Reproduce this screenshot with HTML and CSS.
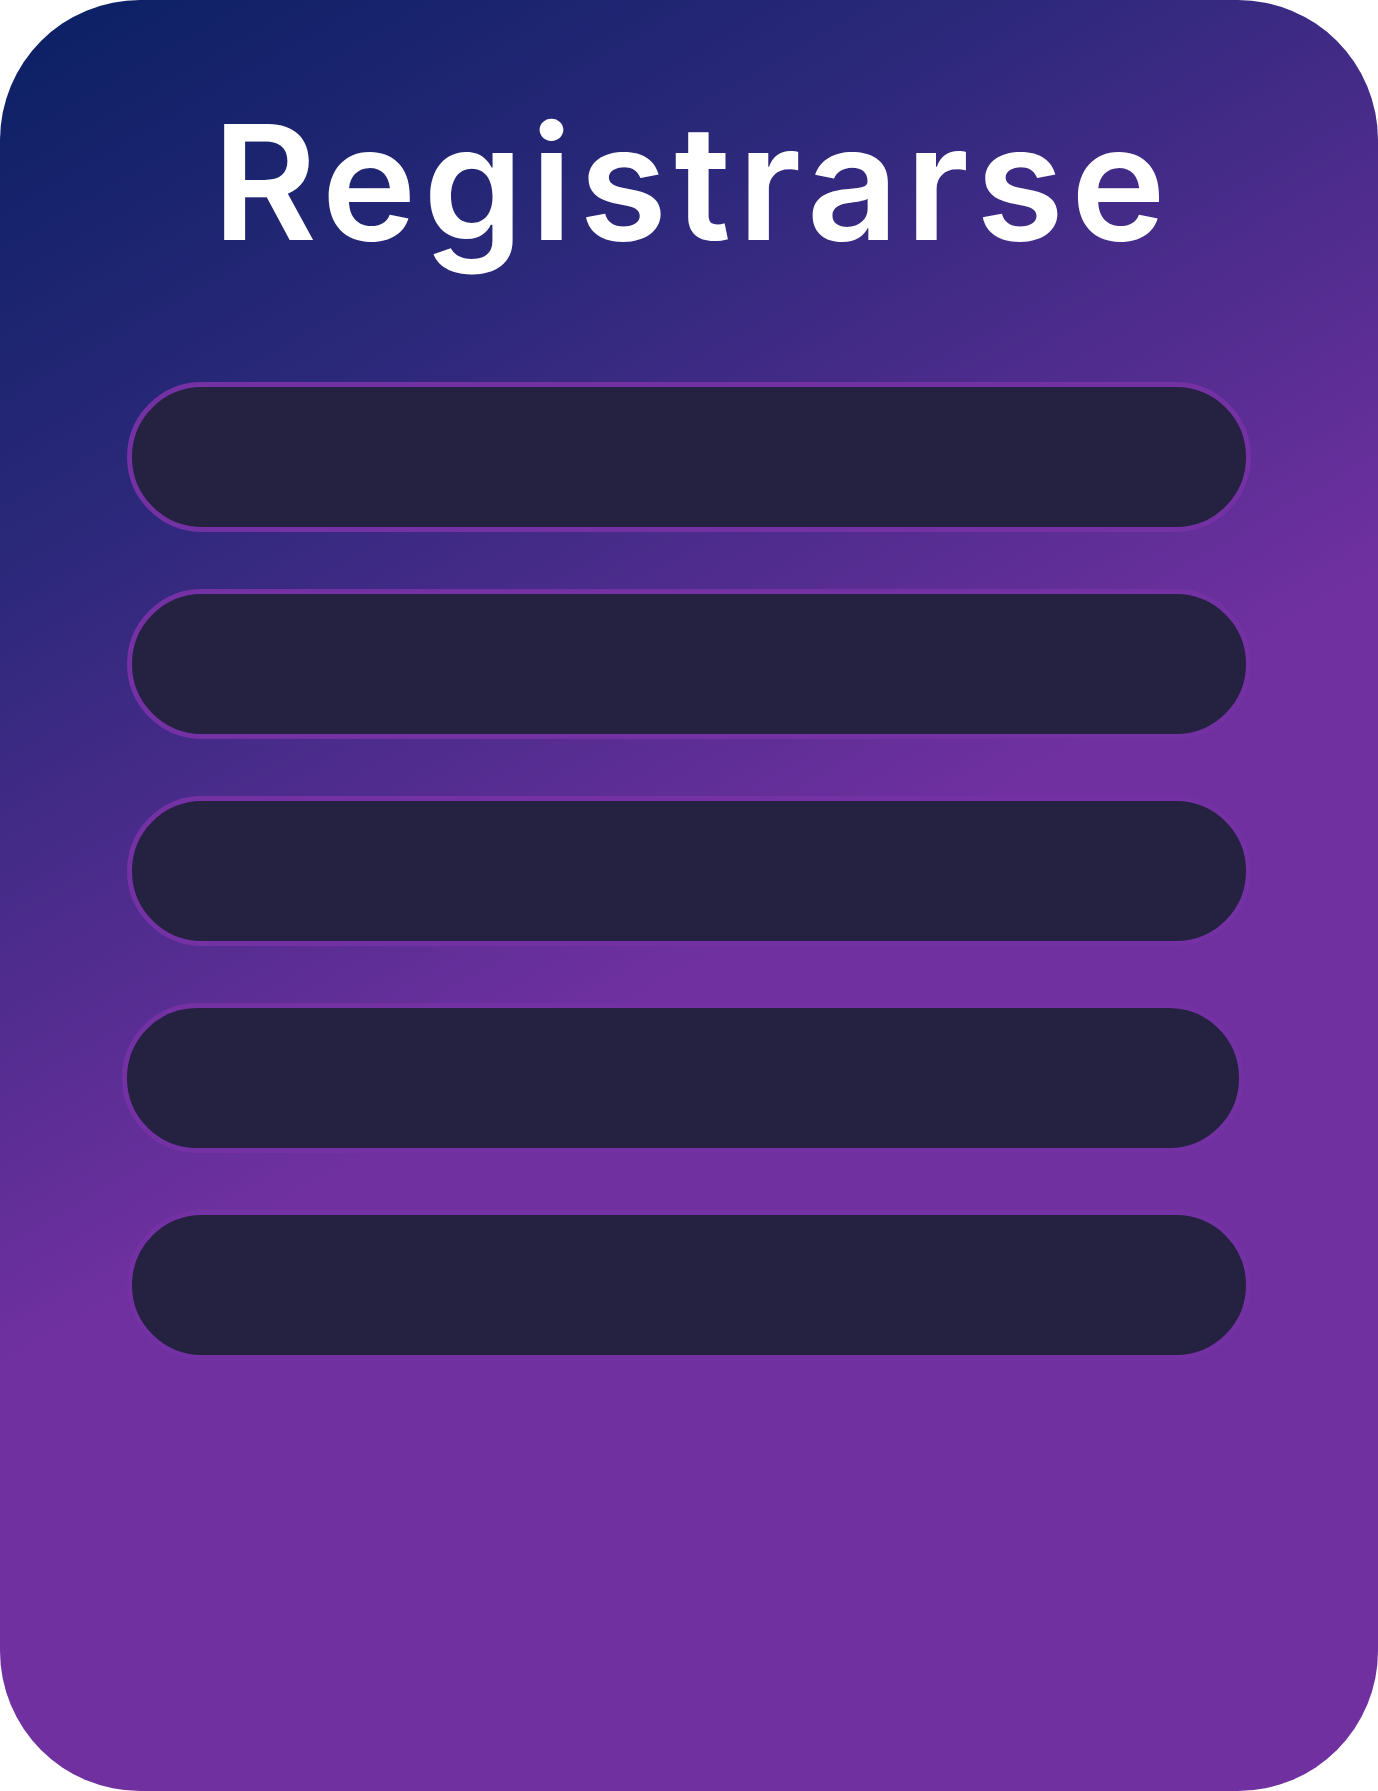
FILE: index.html
```html
<!DOCTYPE html>
<html lang="es">
<head>
<meta charset="utf-8">
<title>Registrarse</title>
<link rel="stylesheet" href="styles.css">
</head>
<body>
<main class="card">
  <h1 class="title">Registrarse</h1>
  <form class="form">
    <input class="field" type="text" aria-label="Nombre">
    <input class="field" type="email" aria-label="Correo">
    <input class="field" type="text" aria-label="Usuario">
    <input class="field field--shift" type="password" aria-label="Contraseña">
    <input class="field" type="password" aria-label="Confirmar contraseña">
  </form>
</main>
</body>
</html>
```

FILE: styles.css
```css
* { box-sizing: border-box; }
html, body { margin: 0; padding: 0; background: #ffffff; }
.card {
  width: 1378px;
  height: 1791px;
  border-radius: 140px;
  background: linear-gradient(150deg, #0a2063 0%, #2b287a 22%, #7030a0 53%, #7030a0 100%);
  padding-top: 102px;
  display: flex;
  flex-direction: column;
  align-items: center;
  font-family: "Inter", "Liberation Sans", sans-serif;
}
.title {
  margin: 0;
  padding-left: 7px;
  font-size: 160px;
  line-height: 160px;
  font-weight: 600;
  color: #ffffff;
  letter-spacing: 7px;
  text-align: center;
}
.form {
  margin-top: 120px;
  display: flex;
  flex-direction: column;
  align-items: center;
  gap: 57px;
  width: 100%;
}
.field {
  display: block;
  width: 1124px;
  height: 150px;
  border: 5px solid #7331a3;
  border-radius: 75px;
  background: #252141;
  outline: none;
  appearance: none;
  padding: 0 60px;
  color: #ffffff;
  font: inherit;
}
.field--shift {
  margin-right: 12px;
  width: 1122px;
}
```
